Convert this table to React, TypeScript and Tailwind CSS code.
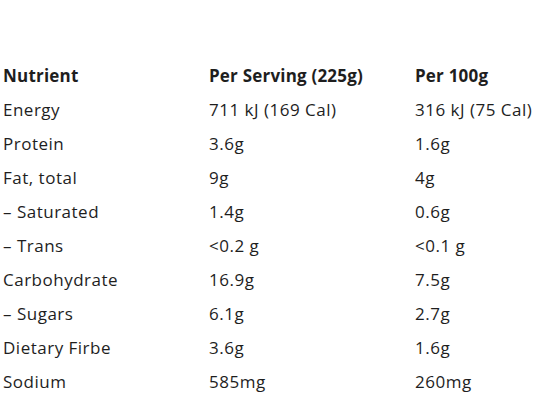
const rows = [
  ['Energy', '711 kJ (169 Cal)', '316 kJ (75 Cal)'],
  ['Protein', '3.6g', '1.6g'],
  ['Fat, total', '9g', '4g'],
  ['– Saturated', '1.4g', '0.6g'],
  ['– Trans', '<0.2 g', '<0.1 g'],
  ['Carbohydrate', '16.9g', '7.5g'],
  ['– Sugars', '6.1g', '2.7g'],
  ['Dietary Firbe', '3.6g', '1.6g'],
  ['Sodium', '585mg', '260mg'],
];

export default function App() {
  return (
    <div className="w-[559px] h-[401px] bg-white overflow-hidden pt-[59px] text-[#1e1e1e] text-[17px] tracking-[0.5px] font-['Open_Sans',sans-serif]">
      <div className="grid grid-cols-[206px_206px_1fr]">
        <div className="h-[34px] flex items-center px-[3px] font-bold tracking-[0.2px]">Nutrient</div>
        <div className="h-[34px] flex items-center px-[3px] font-bold tracking-[0.2px]">Per Serving (225g)</div>
        <div className="h-[34px] flex items-center px-[3px] font-bold tracking-[0.2px]">Per 100g</div>
        {rows.map((r) =>
          r.map((c, i) => (
            <div key={r[0] + i} className="h-[34px] flex items-center px-[3px]">
              {c}
            </div>
          ))
        )}
      </div>
    </div>
  );
}
